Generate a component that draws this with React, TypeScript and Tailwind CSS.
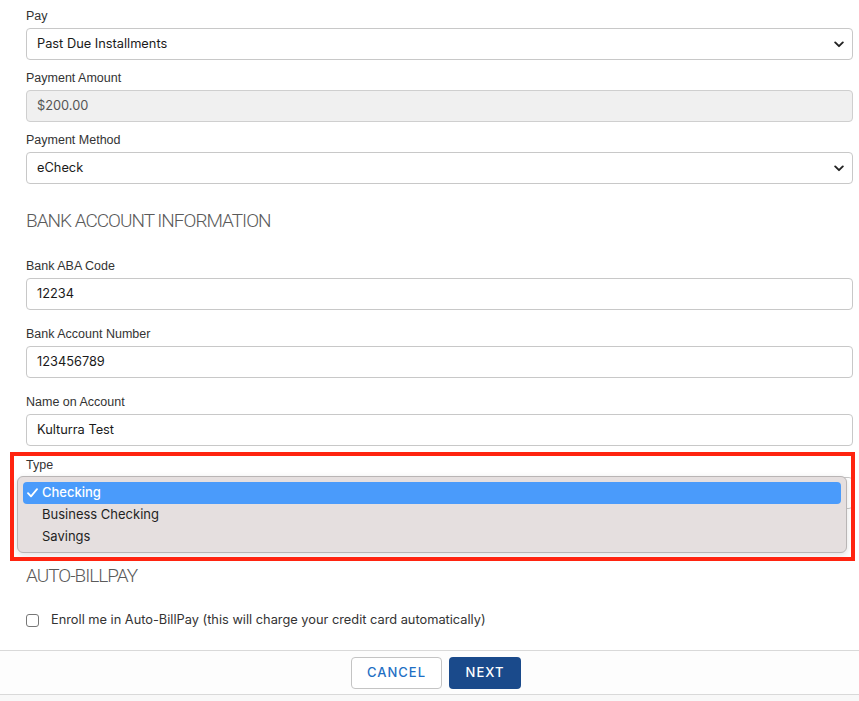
import React from "react";

const labelCls =
  "block h-[20px] leading-[20px] mb-[2px] text-[12.5px] text-[#333] font-['Liberation_Sans',Arial,sans-serif]";
const boxCls =
  "h-[32px] w-full rounded-[4px] border border-[#c8c8c8] flex items-center pl-[10px] pr-[8px] text-[12.8px] font-['Inter','Liberation_Sans',sans-serif]";

function Chevron() {
  return (
    <svg width="10" height="7" viewBox="0 0 10 7" className="ml-auto">
      <path d="M1.2 1.4 L5 5.2 L8.8 1.4" fill="none" stroke="#222" strokeWidth="1.9" strokeLinecap="round" strokeLinejoin="round" />
    </svg>
  );
}

function SelectField({ label, value }: { label: string; value: string }) {
  return (
    <div className="mb-[8px]">
      <label className={labelCls}>{label}</label>
      <div className={boxCls + " bg-white text-[#1a1a1a]"}>
        <span>{value}</span>
        <Chevron />
      </div>
    </div>
  );
}

function InputField({
  label,
  value,
  disabled,
  mb = "mb-[8px]",
}: {
  label: string;
  value: string;
  disabled?: boolean;
  mb?: string;
}) {
  return (
    <div className={mb}>
      <label className={labelCls}>{label}</label>
      <div
        className={
          boxCls +
          (disabled ? " bg-[#f0f0f0] text-[#555] border-[#cfcfcf]" : " bg-white text-[#1a1a1a]")
        }
      >
        <span>{value}</span>
      </div>
    </div>
  );
}

function Heading({ children }: { children: React.ReactNode }) {
  return (
    <h2 className="h-[24px] leading-[24px] text-[19px] font-light tracking-[-1px] text-[#5a5a5a] font-['Roboto','Liberation_Sans',sans-serif]">
      {children}
    </h2>
  );
}

export default function App() {
  return (
    <div className="w-[859px] h-[701px] bg-white relative overflow-hidden flex flex-col">
      <div className="pl-[26px] pr-[6px] pt-[6px] flex flex-col">
        <SelectField label="Pay" value="Past Due Installments" />
        <InputField label="Payment Amount" value="$200.00" disabled />
        <SelectField label="Payment Method" value="eCheck" />

        <div className="mt-[17px] mb-[23px]">
          <Heading>BANK ACCOUNT INFORMATION</Heading>
        </div>

        <InputField label="Bank ABA Code" value="12234" mb="mb-[14px]" />
        <InputField label="Bank Account Number" value="123456789" mb="mb-[14px]" />
        <InputField label="Name on Account" value="Kulturra Test" mb="mb-[9px]" />

        <div className="mb-[8px]">
          <label className={labelCls}>Type</label>
          <div className={boxCls + " bg-white text-[#1a1a1a] pr-[2px]"}>
            <span className="invisible">Checking</span>
            <Chevron />
          </div>
        </div>

        <div className="mt-[47px]">
          <Heading>AUTO-BILLPAY</Heading>
        </div>

        <div className="mt-[22px] h-[20px] flex items-center">
          <span className="w-[13px] h-[13px] rounded-[3px] border border-[#777] bg-white"></span>
          <span className="ml-[12px] text-[12.8px] text-[#333] font-['Inter','Liberation_Sans',sans-serif]">
            Enroll me in Auto-BillPay (this will charge your credit card automatically)
          </span>
        </div>
      </div>

      <div className="mt-[20px] border-t border-b border-[#d9d9d9] bg-[#fdfdfd] h-[45px] flex items-center justify-center gap-[7px] pl-[13px]">
        <button className="w-[91px] h-[32px] rounded-[4px] border border-[#c4c4c4] bg-white text-[#1f6fc4] text-[13px] tracking-[1px] font-medium font-['Inter','Liberation_Sans',sans-serif]">
          CANCEL
        </button>
        <button className="w-[72px] h-[32px] rounded-[4px] bg-[#1a4a8b] text-white text-[13px] tracking-[1px] font-medium font-['Inter','Liberation_Sans',sans-serif]">
          NEXT
        </button>
      </div>
      <div className="flex-1 bg-[#f8f8f8]"></div>

      {/* native select dropdown menu overlay */}
      <div className="absolute left-[17px] top-[476px] w-[830px] h-[77px] rounded-[6px] border border-[#b9b5b5] bg-[#e5dfdf] shadow-[0_2px_6px_rgba(0,0,0,0.12)] pt-[5px] px-[5px] font-['Inter','Liberation_Sans',sans-serif] text-[13px]">
        <div className="h-[22px] rounded-[4px] bg-[#4a9bfb] text-white flex items-center">
          <span className="w-[19px] pl-[4px] flex items-center">
            <svg width="11" height="10" viewBox="0 0 11 10">
              <path d="M1 5.2 L4 8.4 L10 1.2" fill="none" stroke="#fff" strokeWidth="1.8" strokeLinecap="round" strokeLinejoin="round" />
            </svg>
          </span>
          <span className="font-medium">Checking</span>
        </div>
        <div className="h-[22px] flex items-center pl-[19px] text-[#1f1f1f]">Business Checking</div>
        <div className="h-[22px] flex items-center pl-[19px] text-[#1f1f1f]">Savings</div>
      </div>

      {/* red annotation box */}
      <div className="absolute left-[10px] top-[452px] w-[845px] h-[109px] border-[4px] border-[#ff2410] pointer-events-none"></div>
    </div>
  );
}
